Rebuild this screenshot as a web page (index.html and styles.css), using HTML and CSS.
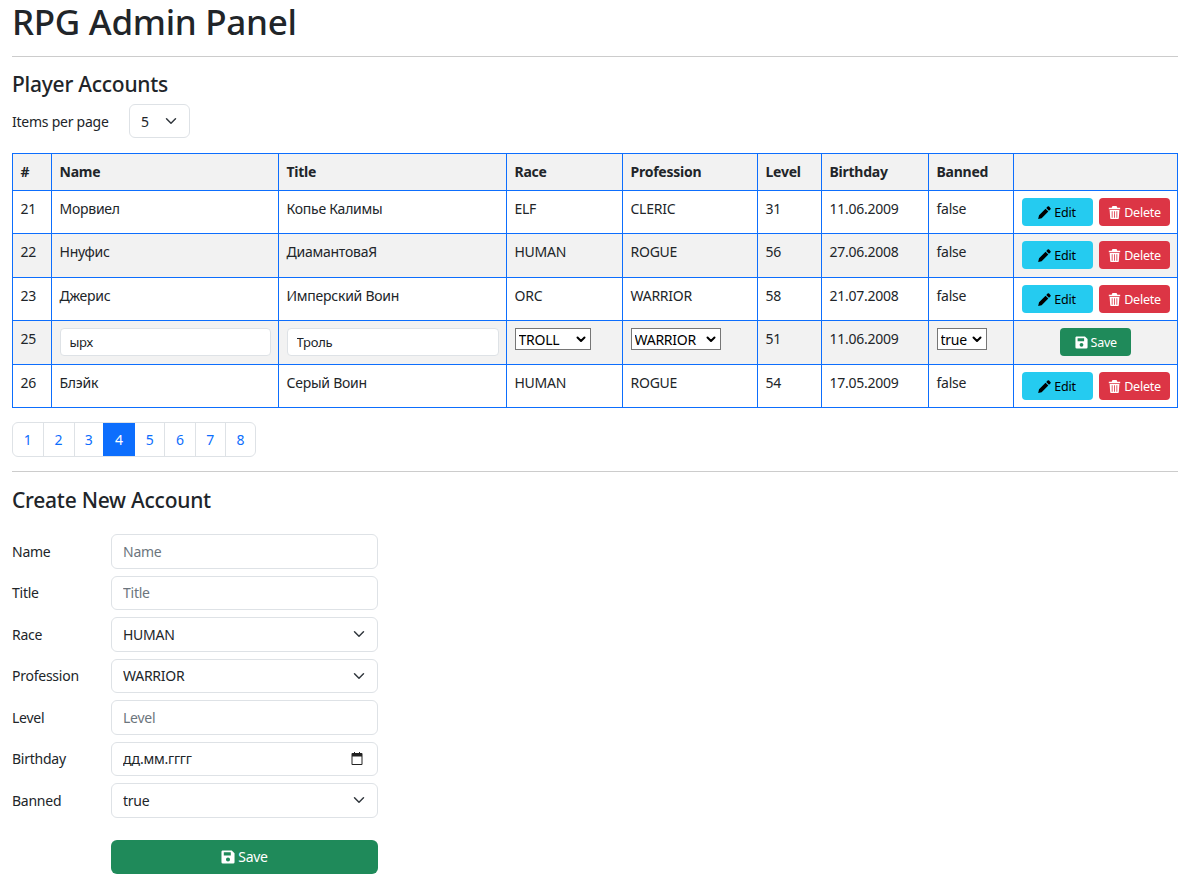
FILE: index.html
```html
<!DOCTYPE html>
<html lang="ru">
<head>
<meta charset="UTF-8">
<meta name="viewport" content="width=device-width, initial-scale=1.0">
<title>RPG Admin Panel</title>
<link rel="stylesheet" href="styles.css">
</head>
<body>
<svg class="icon-defs" aria-hidden="true">
  <symbol id="i-pencil" viewBox="0.500 0.500 15 15"><path d="M11.600 1.200a1.200 1.200 0 0 1 1.700 0l1.500 1.500a1.200 1.200 0 0 1 0 1.700l-1.600 1.600-3.200-3.200zM9.200 3.600l3.200 3.200-7.700 7.700-4 1 1-4.200z"/></symbol>
  <symbol id="i-trash" viewBox="1 0 14 16"><path fill-rule="evenodd" d="M5.500 0h5l1 2H15v2H1V2h3.500zM2 5h12l-.7 10a1 1 0 0 1-1 1H3.700a1 1 0 0 1-1-1zm2.600 1.500v8h1v-8zm2.900 0v8h1v-8zm2.900 0v8h1v-8z"/></symbol>
  <symbol id="i-save" viewBox="0.500 0.500 15 15"><path fill-rule="evenodd" d="M2 1h10l3 3v9.500A1.500 1.500 0 0 1 13.500 15h-11A1.500 1.500 0 0 1 1 13.500v-11A1.500 1.500 0 0 1 2 1zm1.500 2v3.500h7.500V3zM8 8.500a2.200 2.200 0 1 0 0 4.400 2.200 2.200 0 0 0 0-4.400z"/></symbol>
</svg>

<h1 class="page-title">RPG Admin Panel</h1>
<hr class="divider">

<h2 class="section-title">Player Accounts</h2>
<div class="per-page">
  <label for="perPage">Items per page</label>
  <select id="perPage" class="control control-select per-page-select"><option>5</option></select>
</div>

<table class="accounts">
  <colgroup>
    <col class="col-id"><col class="col-name"><col class="col-title"><col class="col-race"><col class="col-prof"><col class="col-level"><col class="col-birth"><col class="col-banned"><col class="col-actions">
  </colgroup>
  <thead>
    <tr><th>#</th><th>Name</th><th>Title</th><th>Race</th><th>Profession</th><th>Level</th><th>Birthday</th><th>Banned</th><th></th></tr>
  </thead>
  <tbody>
    <tr>
      <td>21</td><td>Морвиел</td><td>Копье Калимы</td><td>ELF</td><td>CLERIC</td><td>31</td><td>11.06.2009</td><td>false</td>
      <td><div class="actions"><button class="btn btn-edit"><svg class="icon"><use href="#i-pencil"/></svg>Edit</button><button class="btn btn-delete"><svg class="icon"><use href="#i-trash"/></svg>Delete</button></div></td>
    </tr>
    <tr class="shaded">
      <td>22</td><td>Ннуфис</td><td>ДиамантоваЯ</td><td>HUMAN</td><td>ROGUE</td><td>56</td><td>27.06.2008</td><td>false</td>
      <td><div class="actions"><button class="btn btn-edit"><svg class="icon"><use href="#i-pencil"/></svg>Edit</button><button class="btn btn-delete"><svg class="icon"><use href="#i-trash"/></svg>Delete</button></div></td>
    </tr>
    <tr>
      <td>23</td><td>Джерис</td><td>Имперский Воин</td><td>ORC</td><td>WARRIOR</td><td>58</td><td>21.07.2008</td><td>false</td>
      <td><div class="actions"><button class="btn btn-edit"><svg class="icon"><use href="#i-pencil"/></svg>Edit</button><button class="btn btn-delete"><svg class="icon"><use href="#i-trash"/></svg>Delete</button></div></td>
    </tr>
    <tr class="shaded">
      <td>25</td>
      <td><input class="cell-input" type="text" value="ырх"></td>
      <td><input class="cell-input" type="text" value="Троль"></td>
      <td><select class="cell-select select-race"><option>TROLL</option></select></td>
      <td><select class="cell-select select-prof"><option>WARRIOR</option></select></td>
      <td>51</td><td>11.06.2009</td>
      <td><select class="cell-select select-banned"><option>true</option></select></td>
      <td><div class="actions actions-center"><button class="btn btn-save"><svg class="icon"><use href="#i-save"/></svg>Save</button></div></td>
    </tr>
    <tr>
      <td>26</td><td>Блэйк</td><td>Серый Воин</td><td>HUMAN</td><td>ROGUE</td><td>54</td><td>17.05.2009</td><td>false</td>
      <td><div class="actions"><button class="btn btn-edit"><svg class="icon"><use href="#i-pencil"/></svg>Edit</button><button class="btn btn-delete"><svg class="icon"><use href="#i-trash"/></svg>Delete</button></div></td>
    </tr>
  </tbody>
</table>

<nav class="pagination">
  <a href="#">1</a><a href="#">2</a><a href="#">3</a><a href="#" class="current">4</a><a href="#">5</a><a href="#">6</a><a href="#">7</a><a href="#">8</a>
</nav>
<hr class="divider divider-low">

<h2 class="section-title section-create">Create New Account</h2>
<form class="create-form">
  <div class="form-row"><label for="fName">Name</label><input id="fName" class="control" type="text" placeholder="Name"></div>
  <div class="form-row"><label for="fTitle">Title</label><input id="fTitle" class="control" type="text" placeholder="Title"></div>
  <div class="form-row"><label for="fRace">Race</label><select id="fRace" class="control control-select"><option>HUMAN</option></select></div>
  <div class="form-row"><label for="fProf">Profession</label><select id="fProf" class="control control-select"><option>WARRIOR</option></select></div>
  <div class="form-row"><label for="fLevel">Level</label><input id="fLevel" class="control" type="text" placeholder="Level"></div>
  <div class="form-row"><label for="fBirth">Birthday</label><input id="fBirth" class="control control-date" type="text" value="дд.мм.гггг"></div>
  <div class="form-row"><label for="fBanned">Banned</label><select id="fBanned" class="control control-select"><option>true</option></select></div>
  <div class="form-row form-submit"><button type="button" class="btn btn-save btn-wide"><svg class="icon"><use href="#i-save"/></svg>Save</button></div>
</form>
</body>
</html>
```
FILE: styles.css
```css
* {
    box-sizing: border-box;
}

body {
    margin: 0;
    padding: 0 13px 0 12px;
    font-family: "Noto Sans", "Open Sans", sans-serif;
    font-size: 14px;
    line-height: 21px;
    letter-spacing: -0.25px;
    color: #212529;
    background-color: #fff;
}

.icon-defs {
    display: none;
}

.page-title {
    margin: 0;
    padding-top: 1px;
    font-size: 35px;
    line-height: 41px;
    letter-spacing: -0.3px;
    font-weight: 500;
}

.divider {
    margin: 14px 0 0;
    border: 0;
    border-top: 1px solid #ccc;
}

.section-title {
    margin: 13px 0 0;
    font-size: 21px;
    line-height: 28px;
    font-weight: 500;
}

.section-create {
    margin-top: 14px;
}

.per-page {
    display: flex;
    align-items: center;
    margin-top: 6px;
}

.per-page label {
    width: 117px;
}

.control {
    display: block;
    width: 267px;
    height: 34.5px;
    padding: 0 11px;
    font: inherit;
    letter-spacing: inherit;
    color: #212529;
    background-color: #fff;
    border: 1px solid #dee2e6;
    border-radius: 6px;
    appearance: none;
}

.control::placeholder {
    color: #6c757d;
}

.control-select {
    background-image: url("data:image/svg+xml,%3csvg xmlns='http://www.w3.org/2000/svg' viewBox='0 0 16 16'%3e%3cpath fill='none' stroke='%23343a40' stroke-linecap='round' stroke-linejoin='round' stroke-width='2' d='m2 5 6 6 6-6'/%3e%3c/svg%3e");
    background-repeat: no-repeat;
    background-position: right 12px center;
    background-size: 12px 12px;
}

.control-date {
    background-image: url("data:image/svg+xml,%3csvg xmlns='http://www.w3.org/2000/svg' viewBox='0 0 12 13'%3e%3cpath fill='%23222' fill-rule='evenodd' d='M1.500 1H3V0h1v1h4V0h1v1h1.500A1 1 0 0 1 11.500 2v10a1 1 0 0 1-1 1h-9a1 1 0 0 1-1-1V2a1 1 0 0 1 1-1zm0 3.500V12h9V4.500z'/%3e%3c/svg%3e");
    background-repeat: no-repeat;
    background-position: right 14px center;
    background-size: 12px 13px;
}

.per-page-select {
    width: 61px;
    height: 34px;
}

.accounts {
    width: 1165px;
    margin-top: 15px;
    table-layout: fixed;
    border-collapse: collapse;
}

.accounts th,
.accounts td {
    padding: 7px 7px 7.5px 7.5px;
    border: 1px solid #0d6efd;
    text-align: left;
    vertical-align: top;
}

.accounts th {
    font-weight: 700;
    background-color: #f2f2f2;
}

.shaded td {
    background-color: #f2f2f2;
}

.col-id { width: 39px; }
.col-name { width: 227px; }
.col-title { width: 228px; }
.col-race { width: 116px; }
.col-prof { width: 135px; }
.col-level { width: 64px; }
.col-birth { width: 107px; }
.col-banned { width: 85px; }
.col-actions { width: 164px; }

.actions {
    display: flex;
    justify-content: space-between;
    height: 28px;
}

.actions-center {
    justify-content: center;
}

.btn {
    display: inline-flex;
    align-items: center;
    justify-content: center;
    gap: 3px;
    width: 71px;
    height: 28px;
    padding: 1px 0 0;
    font: inherit;
    font-size: 12.5px;
    letter-spacing: inherit;
    border: 0;
    border-radius: 4px;
}

.icon {
    width: 13px;
    height: 13px;
    fill: currentColor;
}

.btn-edit {
    color: #000;
    background-color: #25cbf0;
}

.btn-delete {
    color: #fff;
    background-color: #dc3545;
}

.btn-save {
    color: #fff;
    background-color: #1f8a5a;
}

.btn-wide {
    width: 267px;
    height: 34px;
    padding: 0;
    font-size: 14px;
    border-radius: 6px;
}

.btn-wide .icon {
    width: 14px;
    height: 14px;
}

.cell-input {
    display: block;
    width: 100%;
    height: 28px;
    padding: 0 9px;
    font: inherit;
    font-size: 13px;
    letter-spacing: inherit;
    color: #212529;
    background-color: #fff;
    border: 1px solid #dee2e6;
    border-radius: 4px;
}

.cell-select {
    display: block;
    height: 22px;
    padding: 0 0 0 3px;
    font: inherit;
    letter-spacing: inherit;
    color: #000;
    background-color: #fff;
    border: 1px solid #767676;
    border-radius: 0;
    appearance: none;
    background-image: url("data:image/svg+xml,%3csvg xmlns='http://www.w3.org/2000/svg' viewBox='0 0 10 7'%3e%3cpath fill='none' stroke='%23000' stroke-width='2' stroke-linecap='round' stroke-linejoin='round' d='m1.500 1.500 3.500 3.500 3.500-3.500'/%3e%3c/svg%3e");
    background-repeat: no-repeat;
    background-position: right 4px center;
    background-size: 10px 7px;
}

.select-race { width: 76px; }
.select-prof { width: 90px; }
.select-banned { width: 50px; }

.pagination {
    display: flex;
    width: max-content;
    margin-top: 14px;
    border: 1px solid #dee2e6;
    border-radius: 6px;
    overflow: hidden;
}

.pagination a {
    width: 30.25px;
    height: 33px;
    line-height: 33px;
    text-align: center;
    color: #0d6efd;
    text-decoration: none;
    border-left: 1px solid #dee2e6;
}

.pagination a:first-child {
    border-left: 0;
}

.pagination a:nth-child(-n+3) {
    padding-right: 1px;
}

.pagination .current {
    width: 32.25px;
    margin: 0 -1px;
    color: #fff;
    background-color: #0d6efd;
    border-left: 0;
    position: relative;
}

.create-form {
    margin-top: 20px;
}

.form-row {
    display: flex;
    align-items: center;
    margin-bottom: 7px;
}

.form-row label {
    width: 99px;
}

.form-submit {
    margin-top: 22px;
    padding-left: 99px;
    margin-bottom: 11px;
}
```
